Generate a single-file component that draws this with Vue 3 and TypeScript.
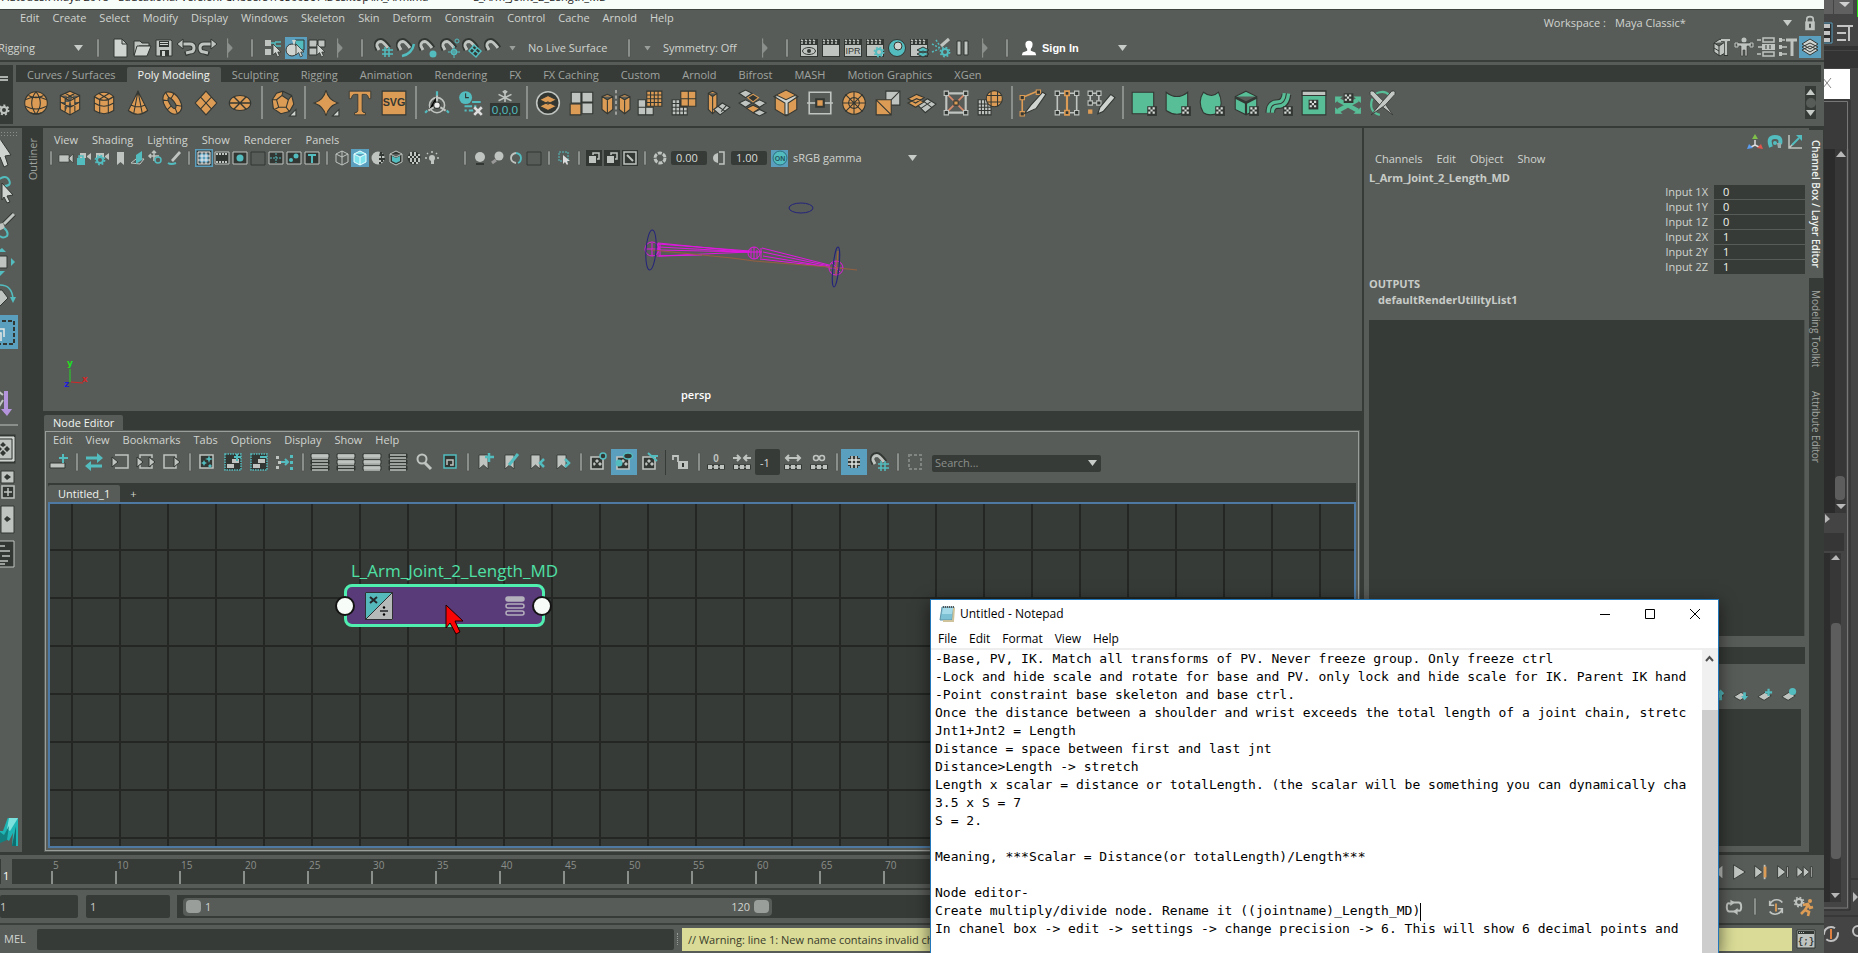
<script setup lang="ts">
import { h, ref } from 'vue'

const G = '#c0c4c0'
const T = '#52bcbf'
const O = '#dd9c55'
const D = '#333733'
const N = '#57be98'

type IconProps = { n: string; s?: number; v?: string; w?: number }

const checker = (x: number, y: number) =>
  `<path fill="${D}" d="M${x} ${y}h9v9h-9z"/><path fill="#d8dcd8" d="M${x + 1} ${y + 1}h2v2h-2zM${x + 5} ${y + 1}h2v2h-2zM${x + 3} ${y + 3}h2v2h-2zM${x + 1} ${y + 5}h2v2h-2zM${x + 5} ${y + 5}h2v2h-2z"/>`
const clap = (extra: string) =>
  `<path fill="${D}" d="M1 1h18v18H1z"/><path fill="${G}" d="M2 7h16v11H2z"/><path stroke="${G}" stroke-width="1.500" d="M2 2l2 1M6 2l2 1M10 2l2 1M14 2l2 1M4 5L2 5M8 5H6M12 5h-2M16 5h-2"/>${extra}`
const gear = (x: number, y: number, c: string) =>
  `<circle cx="${x}" cy="${y}" r="3" fill="none" stroke="${c}" stroke-width="2"/><circle cx="${x}" cy="${y}" r="4.600" fill="none" stroke="${c}" stroke-width="1.600" stroke-dasharray="1.800 1.800"/>`
const magnet = (extra: string) =>
  `<path fill="none" stroke="${D}" stroke-width="5" d="M4 12L2.500 8Q1.500 3 7 2.500Q10 2.500 15 10"/><path fill="none" stroke="${G}" stroke-width="3" d="M5 12L3 8Q2.500 4 7 3.500Q9 3.500 14 10"/>${extra}`
const pointer = (x: number, y: number) =>
  `<path fill="#d0d4d0" stroke="${D}" stroke-width=".8" transform="translate(${x} ${y})" d="M0 0v11l2.600-2.400L4.500 13l2-1L4.800 8H8z"/>`
const bars = (filled: number) =>
  [0, 1, 2].map(i => `<path fill="${i < filled ? G : D}" stroke="${D}" d="M1 ${2 + i * 6}h18v4H1z"/><path stroke="${G}" stroke-width="1.500" d="M2 ${3 + i * 6}h16M2 ${6 + i * 6}h16"/>`).join('')
const clock = `<circle cx="7" cy="7" r="6" fill="${T}"/><path stroke="${D}" fill="none" d="M7 3v4h3"/>`
const bookmark = `<path fill="${G}" stroke="${D}" stroke-width=".8" d="M4 3h9v14l-4.500-4L4 17z"/>`
const graphBox = `<path fill="${D}" stroke="${G}" stroke-width="1.600" d="M3 5h12v12H3z"/><path fill="${G}" d="M9 7l2 2-2 2-2-2zM6 10l2 2-2 2-1-2zM12 10l2 2-2 2-2-2z"/>`
const dots3 = `<path stroke="${D}" stroke-width="5" d="M1 15h18"/><path fill="${G}" d="M2 13h4v4H2zM8 13h4v4H8zM14 13h4v4h-4z"/><path stroke="${G}" d="M2 15h16"/>`
const layer = `<path fill="${G}" stroke="${D}" d="M1 11l8-5 7 4-8 5z"/>`

const icons: Record<string, string> = {
  // shelf
  sphere: `<circle cx="12" cy="12" r="10.500" fill="${O}" stroke="${D}"/><path fill="none" stroke="${D}" d="M2 9q10-5 20 0M2 15q10 5 20 0M12 1.500Q4 12 12 22.500M12 1.500Q20 12 12 22.500M5 5q7 4 14 0M7 21q5 2 10 0"/>`,
  cube: `<path fill="${O}" stroke="${D}" d="M12 1l9 4v13l-9 5-9-5V5zM3 5l9 5 9-5M12 10v13M7.500 3l9 5v12M16.500 3l-9 5v12M3 11l9 5 9-5"/>`,
  cylinder: `<path fill="${O}" stroke="${D}" d="M3 6v13q9 6 18 0V6q-9-8-18 0zM3 6q9 7 18 0M3 12q9 6 18 0M8 9v13M16 9v13M7 3l10 6M17 3L7 9"/>`,
  cone: `<path fill="${O}" stroke="${D}" d="M12 1L3 19q9 7 18 0zM12 1L8 22M12 1l4 21M6 14q6 3 12 0"/>`,
  torus: `<path fill="${O}" fill-rule="evenodd" stroke="${D}" d="M6 2q8-2 13 7t-2 13q-6 2-11-6T6 2zM9 7q-2 1 1 6t5 4q2-2-1-6T9 7zM6 2l3 5M3 9l5 1M8 18l3-3M17 22l-2-5M21 15l-5-1M14 3l-3 5"/>`,
  plane: `<path fill="${O}" stroke="${D}" d="M12 1l10 11-10 11L2 12zM7 6.500l10 11M17 6.500l-10 11"/>`,
  disc: `<ellipse cx="12" cy="12" rx="10" ry="7" fill="${O}" stroke="${D}"/><path stroke="${D}" stroke-width="1.300" d="M2 12h20M6 6l12 12M18 6L6 18"/>`,
  platonic: `<path fill="${O}" stroke="${D}" d="M12 1l8 4 2 8-4 7-8 2-7-5-1-8 4-6zM12 1l-1 4 6 4 3-4M17 9l-2 7-7 0L6 9l5-4M6 9L2 9M8 16l-4 2M15 16l3 4"/><path fill="#d0d4d0" stroke="${D}" d="M24 18v6h-6z"/>`,
  star: `<path fill="${O}" stroke="${D}" d="M12 0q2 9 11 12-9 3-11 12Q10 15 1 12 10 9 12 0z"/><path fill="#d0d4d0" stroke="${D}" d="M24 18v6h-6z"/>`,
  type: `<path fill="${O}" stroke="${D}" stroke-width=".8" d="M2 1h20v7h-2q-.500-4-3-4h-3v15q0 2 3 2v2H7v-2q3 0 3-2V4H7Q4.500 4 4 8H2z"/>`,
  svg: `<path fill="${O}" stroke="${D}" d="M1 1h22v22H1z"/><text x="12" y="15" text-anchor="middle" font-family="Liberation Sans,sans-serif" font-weight="bold" font-size="10" fill="${D}">SVG</text>`,
  tripod: `<path stroke="${T}" stroke-width="2" d="M12 1v5M3 19l-2 2M21 19l2 2"/><circle cx="12" cy="14" r="7" fill="none" stroke="${G}" stroke-width="1.500"/><path stroke="${G}" stroke-width="2" d="M12 5v9l-8 5M12 14l8 5"/><circle cx="12" cy="14" r="3" fill="#eee" stroke="${D}"/>`,
  history: `${clock}<path stroke="${T}" stroke-width="1.800" d="M13 11h8M6 15h7M15 15h2M6 19h2M10 19h4"/><path stroke="#ddd" stroke-width="2.500" d="M15 16l7 7M22 16l-7 7"/>`,
  freeze: `<path stroke="${G}" stroke-width="1.500" d="M12 0v11M6 4l12 6M18 4L6 10M10 1l2 2 2-2"/><path fill="${D}" d="M-2 12h28v12H-2z"/><text x="12" y="22" text-anchor="middle" font-family="Liberation Sans,sans-serif" font-size="11" fill="${T}">0,0,0</text>`,
  combine: `<circle cx="12" cy="12" r="10.500" fill="${D}" stroke="${G}" stroke-width="1.500"/><path fill="${O}" stroke="${D}" d="M12 11l8 4-8 4-8-4zM12 5l8 4-8 4-8-4z"/>`,
  separate: `<path fill="${O}" stroke="${D}" d="M1 13h10v10H1z"/><path fill="${G}" stroke="${D}" d="M2 2h9v10H2zM12 2h10v9H12zM12 12h10v10H12z"/>`,
  mirror: `<path fill="${O}" stroke="${D}" d="M-1 6l5-2 5 2v12l-5 4-5-4zM-1 6l5 3 5-3M4 9v12M15 6l5-2 5 2v12l-5 4-5-4zM15 6l5 3 5-3M20 9v12"/><path stroke="#ddd" stroke-dasharray="3 2" d="M12 0v24"/>`,
  smooth: `<path fill="${O}" stroke="${D}" d="M9 1h14v14H9zM9 4.500h14M9 8h14M9 11.500h14M12.500 1v14M16 1v14M19.500 1v14"/><path fill="${G}" stroke="${D}" d="M1 9h7v7H1zM1 16h7v7H1zM8 16h7v7H8z"/>`,
  reduce: `<path fill="${O}" stroke="${D}" d="M9 1h7v7H9zM16 1h7v7h-7zM9 8h7v7H9zM16 8h7v7h-7z"/><path fill="${G}" stroke="${D}" d="M1 9h8v6h6v8H1zM1 12.500h8M1 16h14M1 19.500h14M4.500 9v14M8 9v14M11.500 15v8"/>`,
  extrude: `<path fill="${O}" stroke="${D}" d="M3 3l4-2 4 2v15l-4 4-4-4zM3 3l4 3 4-3M7 6v16"/><path fill="${G}" stroke="${D}" d="M8 18l8-6 7 4-9 7zM12 15l7 5M15 20l5-6"/>`,
  bridge: `<path fill="${G}" stroke="${D}" d="M0 3l6-3 6 3-6 4zM0 12l6-3 6 3-6 4zM13 12l6-3 6 3-6 4zM13 21l6-3 6 3-6 3z"/><path fill="${O}" stroke="${D}" d="M7 17l6-3 6 3-6 4z"/><path fill="${D}" stroke="${O}" d="M8 7l5-3 5 3-5 4z"/>`,
  bevel: `<path fill="${O}" stroke="${D}" d="M12 0l10 5v13l-10 6-10-6V5z"/><path fill="#d0d4d0" stroke="${D}" d="M1 6l3-1 8 4 8-4 3 1-9 6v11h-3V12z"/>`,
  collapse: `<path fill="none" stroke="${G}" stroke-width="1.500" d="M2 2h20v20H2z"/><path stroke="${G}" stroke-width="1.500" d="M0 12h24"/><path fill="${O}" stroke="${D}" stroke-width="2" d="M8.500 8.500h7v7h-7z"/>`,
  fill: `<circle cx="12" cy="12" r="10.500" fill="${O}" stroke="${D}"/><circle cx="12" cy="12" r="5" fill="none" stroke="${D}"/><path stroke="${D}" d="M12 1v22M1 12h22M4 4l16 16M20 4L4 20"/>`,
  triang: `<path fill="${G}" stroke="${D}" d="M10 1h13v13H10z"/><path fill="${O}" stroke="${D}" d="M1 9h14v14H1zM1 9l14 14"/><path stroke="${D}" d="M15 9l8-8"/>`,
  connect: `<path fill="${G}" stroke="${D}" d="M8 14l9-6 8 5-10 8zM11 17l9-6M13 10l8 6"/><path fill="${O}" stroke="${D}" d="M-1 12l8-4 7 3-8 5zM-1 8l8-4 7 3-8 5z"/>`,
  detach: `<path fill="none" stroke="${G}" stroke-width="2" d="M3 3h18v18H3z"/><path stroke="#d98a6a" stroke-width="1.500" d="M4 4l16 16M20 4L4 20"/><path fill="${D}" stroke="${G}" d="M1 1h4v4H1zM19 1h4v4h-4zM1 19h4v4H1zM19 19h4v4h-4z"/><path fill="${O}" stroke="${D}" d="M10 10h4v4h-4z"/>`,
  project: `<path fill="${G}" stroke="${D}" d="M1 9h12v14H1zM1 13h12M1 16h12M1 19h12M4 9v14M7 9v14M10 9v14"/><circle cx="16" cy="8" r="7.500" fill="${O}" stroke="${D}"/><path stroke="${D}" d="M13 1v14M19 1v14M9 5h14M9 11h14"/>`,
  draw: `<path fill="none" stroke="${O}" stroke-width="1.500" d="M2 22V7l14-6"/><path fill="${D}" stroke="${O}" d="M0 5h4v4H0zM15 0h4v4h-4zM0 20h4v4H0z"/><path fill="#d0d4d0" stroke="${D}" d="M4 22l6-8L21 2l3 2-9 13z"/>`,
  edgeflow: `<path fill="none" stroke="${G}" stroke-width="1.500" d="M3 3h18v18H3z"/><path stroke="${O}" stroke-width="2" d="M12 2v20"/><path fill="${D}" stroke="${G}" d="M1 1h4v4H1zM19 1h4v4h-4zM1 19h4v4H1zM19 19h4v4h-4z"/><path fill="${D}" stroke="${O}" stroke-width="1.500" d="M10 1h4v4h-4zM10 19h4v4h-4z"/>`,
  quad: `<path fill="none" stroke="${G}" stroke-width="1.500" d="M2 3h8v9H2z"/><path fill="${D}" stroke="${G}" d="M0 1h4v4H0zM8 1h4v4H8zM0 10h4v4H0zM8 10h4v4H8z"/><path fill="${O}" d="M0 18h4v4H0z"/><path fill="#d0d4d0" stroke="${D}" d="M9 22l2-6L21 4l4 3-11 13z"/>`,
  uvplane: `<path fill="${N}" stroke="${D}" d="M1 2h20v20H1z"/>${checker(15, 15)}`,
  uvcyl: `<path fill="${N}" stroke="${D}" d="M1 2q10 8 20 0v17q-10 7-20 0z"/>${checker(15, 15)}`,
  uvsph: `<path fill="${N}" stroke="${D}" d="M4 2q8 6 14 0 5 10 0 19-8 4-14 0Q-2 11 4 2z"/>${checker(15, 15)}`,
  uvauto: `<path fill="${N}" stroke="${D}" d="M12 1l10 5v12l-10 5-10-5V6zM2 6l10 5 10-5M12 11v12"/><path stroke="${D}" stroke-width="2" fill="none" d="M2 7l10 5 10-5M12 12v11"/>${checker(15, 15)}`,
  uvcont: `<path fill="none" stroke="${D}" stroke-width="9" d="M3 21q0-8 7-8t8-9"/><path fill="none" stroke="${N}" stroke-width="7" d="M3 21q0-8 7-8t8-10"/><path fill="none" stroke="${D}" d="M3 21q0-8 7-8t8-10"/>${checker(15, 15)}`,
  uvedit: `<path fill="${N}" stroke="${D}" d="M1 1h22v22H1z"/><path fill="${G}" stroke="${D}" d="M1 1h22v4H1z"/>${checker(7, 9)}`,
  uvsnap: `<path stroke="${N}" stroke-width="4" d="M3 9l18 10M21 9L3 19"/><path fill="${N}" d="M0 6h7L0 12zM24 6h-7l7 6zM0 22v-6l7 6zM24 22v-6l-7 6z"/>${checker(8, 3)}`,
  uvcut: `<path fill="none" stroke="${N}" stroke-width="2" d="M5 4q9-5 14 1M3 8q-4 12 7 15"/><path fill="#c4c8c4" stroke="${D}" stroke-width=".8" d="M1 4Q0 0 4 1l9 9 9 13L9 13z"/><path fill="#c4c8c4" stroke="${D}" stroke-width=".8" d="M24 4q1-4-3-3l-9 10L2 23l13-9z"/>`,

  // status line
  newdoc: `<path fill="#d0d4d0" stroke="${D}" d="M4 1h8l5 5v13H4z"/><path stroke="${D}" fill="${G}" d="M12 1v5h5z"/>`,
  open: `<path fill="${G}" stroke="${D}" d="M2 3h6l2 2h7v3H7L2 17z"/><path fill="#d0d4d0" stroke="${D}" d="M5 8h14l-4 10H2z"/>`,
  save: `<path fill="${G}" stroke="${D}" d="M2 2h15l1 1v15H2z"/><path fill="${D}" d="M5 3h10v6H5zM6 12h9v6H6z"/><path fill="#d0d4d0" d="M6 4h8v1H6zM6 6h8v1H6zM8 13h3v5H8z"/>`,
  undo: `<path fill="none" stroke="${D}" stroke-width="5" d="M6 6h8q4 0 4 4t-4 4l-5 2"/><path fill="none" stroke="${G}" stroke-width="3" d="M6 6h8q4 0 4 4t-4 4l-4 1"/><path fill="${G}" stroke="${D}" d="M1 6l6-5v10z"/>`,
  redo: `<path fill="none" stroke="${D}" stroke-width="5" d="M14 6H6q-4 0-4 4t4 4l5 2"/><path fill="none" stroke="${G}" stroke-width="3" d="M14 6H6q-4 0-4 4t4 4l4 1"/><path fill="${G}" stroke="${D}" d="M19 6l-6-5v10z"/>`,
  selhier: `<path fill="${G}" d="M1 2h6v6H1zM1 11h6v6H1z"/><path fill="none" stroke="${T}" stroke-width="1.500" d="M7 5h4v7M11 4h6M9 8h8"/>${pointer(9, 6)}`,
  selobj: `<path fill="${T}" stroke="${D}" d="M9 2h9v10H9z"/><circle cx="6" cy="12" r="6" fill="#d0d4d0" stroke="${D}"/><path fill="#d0d4d0" d="M6 2h4l-2 6z"/>${pointer(10, 6)}`,
  selcomp: `<path fill="${G}" stroke="${D}" d="M1 2h8v7H1zM10 2h7v7h-7zM1 10h8v7H1z"/>${pointer(9, 6)}`,
  mgrid: magnet(`<path stroke="${T}" stroke-width="1.500" d="M11 9v10M15 9v10M8 12h11M8 16h11"/>`),
  mcurve: magnet(`<path fill="none" stroke="${T}" stroke-width="2.500" d="M6 18q10-2 12-12"/>`),
  mpoint: magnet(`<circle cx="15" cy="16" r="3.500" fill="${T}"/>`),
  mproj: magnet(`<circle cx="17" cy="3" r="2" fill="none" stroke="${T}"/><circle cx="14" cy="14" r="2.500" fill="none" stroke="${T}" stroke-width="1.500"/><path stroke="${T}" d="M14 8v12M8 14h12"/>`),
  mplane: magnet(`<path fill="${D}" stroke="${T}" stroke-width="1.500" d="M12 7l7 6-5 6-7-6zM10 10l7 6M15 10l-5 6"/>`),
  mlive: magnet(''),
  reye: clap(`<ellipse cx="10" cy="13" rx="6.500" ry="3.500" fill="none" stroke="${D}"/><circle cx="10" cy="13" r="2" fill="${D}"/>`),
  rclap: clap(''),
  ripr: clap(`<text x="10" y="16" text-anchor="middle" font-family="Liberation Sans,sans-serif" font-size="9" fill="${D}">IPR</text>`),
  rset: clap(gear(14, 14, T)),
  rball: `<circle cx="10" cy="10" r="8.500" fill="${T}" stroke="${D}"/><circle cx="11" cy="8" r="4" fill="#d0d4d0" stroke="${D}"/>`,
  rlayer: clap(`<path fill="${T}" stroke="${D}" d="M14 13l6 3-6 3-6-3zM14 9l6 3-6 3-6-3z"/>`),
  rlight: `<path stroke="${G}" stroke-width="3" d="M18 1l-8 7"/><path stroke="${T}" stroke-width="1.500" stroke-dasharray="2 1.500" d="M1 6l8 4M1 14l7-3M5 2l4 6"/>${gear(14, 14, T)}`,
  pause: `<path fill="${G}" stroke="${D}" d="M4 3h4v14H4zM11 3h4v14h-4z"/>`,
  user: `<path fill="#fff" d="M10 2q4 0 4 4 0 3-2 5v2l5 2 1 3H2l1-3 5-2v-2Q6 9 6 6q0-4 4-4z"/>`,
  lock: `<path fill="none" stroke="${G}" stroke-width="2" d="M6 9V5q0-3 4-3t4 3v4"/><path fill="${G}" d="M4 8h12v11H4z"/><path fill="${D}" d="M9 11h2v5H9z"/>`,
  hud1: `<path fill="${G}" stroke="${D}" d="M2 6l6-4 5 3v11l-5 3-6-4zM2 6l5 3 6-4M7 9v10M2 11l5 3"/><path stroke="${D}" stroke-width="4" d="M9 3h9M14 3v16"/><path stroke="${G}" stroke-width="2.500" d="M9 3h9M14 3v15"/>`,
  hud2: `<circle cx="10" cy="3" r="2.500" fill="${G}"/><path fill="${G}" stroke="${D}" stroke-width=".6" d="M3 6h14v3h-4v10h-2v-6H9v6H7V9H3z"/><path fill="none" stroke="${G}" d="M1 6h3v4H1zM16 6h3v4h-3z"/>`,
  hud3: `<path stroke="${G}" stroke-width="1.500" fill="none" d="M1 3h4M7 1h11v4H7zM1 17h4M7 15h11v4H7z"/><path stroke="${G}" stroke-width="1.500" d="M2 10h4"/><path fill="${G}" d="M6 7h13v6H6z"/><path stroke="${D}" d="M10 8v4M14 8v4"/>`,
  hud4: `<path stroke="${G}" stroke-width="1.500" fill="none" d="M3 3h4M3 10h6M3 17h6"/><path fill="${G}" d="M1 1h3v4H1zM1 8h3v4H1zM1 15h3v4H1z"/><path stroke="${G}" stroke-width="3" d="M8 3h11M14 3v16"/>`,
  hud5: `<path fill="#d0d4d0" stroke="${D}" d="M10 9l8 4-8 5-8-5zM10 6l8 4-8 5-8-5zM10 2l8 5-8 5-8-5z"/>`,

  // viewport
  cam: `<path fill="${G}" stroke="${D}" stroke-width=".6" d="M1 5h10v7H1zM11 8l4-4v9l-4-4z"/>`,
  camlock: `<path fill="${G}" d="M4 3h6v5H4zM11 6l4-3v7l-4-3z"/><path fill="none" stroke="${T}" stroke-width="1.500" d="M3 9V6h4v3"/><path fill="${T}" d="M1 8h8v7H1z"/>`,
  camgear: `<path fill="${G}" d="M2 3h8v5H2zM11 6l4-3v7l-4-3z"/>${gear(6, 10, T)}`,
  bm: `<path fill="${G}" d="M5 2h7v13l-3.500-3L5 15z"/>`,
  imgp: `<path fill="none" stroke="${G}" d="M1 13l5-4h8l-4 5z"/><path fill="${T}" d="M6 5l6-4v9l-6 4z"/>`,
  pan2d: `<path stroke="${G}" stroke-width="1.500" fill="none" d="M6 1v10M1 6h10M4 3l2-2 2 2M3 4L1 6l2 2"/><circle cx="10" cy="10" r="3" fill="none" stroke="${T}" stroke-width="1.500"/>`,
  pen: `<path fill="${G}" d="M5 10l8-9 2 2-8 9z"/><path fill="none" stroke="${T}" stroke-width="2" d="M2 13q3 2 8 0"/>`,
  vgrid: `<path fill="none" stroke="${D}" stroke-width="3" d="M2 2h12v12H2z"/><path fill="none" stroke="#eee" d="M2 2h12v12H2zM6 2v12M10 2v12M2 6h12M2 10h12"/>`,
  vfilm: `<path fill="${D}" stroke="${G}" d="M1 2h14v12H1z"/><path stroke="${G}" stroke-dasharray="2 1" stroke-width="2" d="M2 4h12M2 12h12"/>`,
  vres: `<path fill="${D}" stroke="${G}" d="M1 2h14v12H1z"/><circle cx="8" cy="8" r="3.500" fill="${T}"/>`,
  vblank: `<path fill="none" stroke="${D}" d="M1 2h14v13H1z"/>`,
  vchart: `<path fill="${D}" stroke="${G}" d="M1 2h14v12H1z"/><path stroke="${T}" stroke-dasharray="2 1" d="M2 8h12M8 3v10"/>`,
  vsafe: `<path fill="${D}" stroke="${G}" d="M1 2h14v12H1z"/><circle cx="10" cy="6" r="2.500" fill="${T}"/><circle cx="5" cy="10" r="2" fill="${T}"/>`,
  vtext: `<path fill="${D}" stroke="${G}" d="M1 2h14v12H1z"/><path stroke="${T}" stroke-width="2" d="M4 5h8M8 5v8"/>`,
  wire: `<path fill="none" stroke="${G}" d="M8 1l6 3v8l-6 3-6-3V4zM2 4l6 3 6-3M8 7v8M8 1v6"/>`,
  solid: `<path fill="#7fe3ee" stroke="#e8ffff" d="M8 1l6 3v8l-6 3-6-3V4zM2 4l6 3 6-3M8 7v8"/>`,
  half: `<circle cx="8" cy="8" r="6.500" fill="${G}"/><path fill="${D}" d="M10 2h2v2h2v2h-2v2h3v2h-2v2h-2v2h-2v-2h2v-2h-2V8h2V6h-2z"/>`,
  shadec: `<path fill="${D}" stroke="${G}" d="M8 1l6 3v8l-6 3-6-3V4zM2 4l6 3 6-3"/><path fill="${T}" d="M4 6l4 2 4-2v5l-4 2-4-2z"/>`,
  checkb: `<circle cx="8" cy="8" r="6.500" fill="${D}"/><path stroke="${G}" stroke-width="2" stroke-dasharray="2 2" d="M4 3h8M2 7h12M4 11h10"/><path stroke="${G}" stroke-width="2" stroke-dasharray="2 2" d="M4 5h10M4 9h10M6 13h6"/>`,
  bulb: `<circle cx="8" cy="8" r="3" fill="${G}"/><path fill="${G}" d="M7 10h3v4H7z"/><path stroke="${G}" stroke-width="1.500" d="M1 8h2M13 8h2M3 3l1 1M13 3l-1 1M8 1v2"/>`,
  ball: `<circle cx="8" cy="7" r="5" fill="${G}"/><path stroke="${D}" stroke-width="2" d="M4 14h8"/>`,
  ball2: `<circle cx="9" cy="6" r="4.500" fill="${G}"/><path stroke="#999" stroke-width="3" d="M2 13l4-3"/>`,
  ballo: `<path fill="none" stroke="${G}" stroke-width="1.800" d="M8 3q-5 1-5 5t5 5"/><path fill="none" stroke="${T}" stroke-width="1.800" d="M8 3q5 1 5 5t-3 5"/>`,
  isel: `<path fill="none" stroke="${T}" stroke-dasharray="2 1" d="M3 2h9v9H3z"/><path fill="#ddd" d="M7 5v9l2-2 2 3 1-1-1-3h3z"/>`,
  cube2: `<path fill="${D}" d="M0 0h16v16H0z"/><path fill="${G}" d="M3 6h7v7H3z"/><path fill="none" stroke="${G}" stroke-width="1.500" d="M7 5V3h6v6h-2"/>`,
  xray: `<path fill="${D}" d="M0 0h16v16H0z"/><path fill="none" stroke="${G}" stroke-width="1.500" d="M2 2h12v12H2z"/><path stroke="${G}" stroke-width="2" d="M5 5l6 6"/>`,
  aper: `<circle cx="8" cy="8" r="5" fill="none" stroke="${G}" stroke-width="3" stroke-dasharray="4 1.200"/>`,
  gam: `<path fill="none" stroke="${G}" stroke-width="1.500" d="M9 2h5v12H9"/><path fill="${G}" d="M8 3v10q-5-1-5-5t5-5z"/>`,
  on: `<circle cx="8" cy="8" r="7" fill="${T}" stroke="#2b6f80"/><text x="8" y="10.500" text-anchor="middle" font-family="Liberation Sans,sans-serif" font-size="7" font-weight="bold" fill="#24545e">ON</text>`,

  // node editor
  addnode: `<path fill="${G}" stroke="${D}" d="M1 11h15v5H1z"/><path stroke="${T}" stroke-width="2" d="M14 2v9M10 6h9"/>`,
  swap: `<path stroke="${T}" stroke-width="3" d="M2 6h12M6 14h12"/><path fill="${T}" d="M13 1l6 5-6 5zM7 9l-6 5 6 5z"/>`,
  inn: `<path fill="none" stroke="${G}" stroke-width="1.500" d="M5 3h13v13H5"/><path fill="${G}" stroke="${D}" d="M2 5l6 5-6 5z"/>`,
  both: `<path fill="none" stroke="${G}" stroke-width="1.500" d="M4 6V3h12v3M4 13v3h12v-3"/><path fill="${G}" stroke="${D}" d="M1 5l6 5-6 5zM13 5l6 5-6 5z"/>`,
  out: `<path fill="none" stroke="${G}" stroke-width="1.500" d="M14 6V3H2v13h12v-3"/><path fill="${G}" stroke="${D}" d="M12 5l6 5-6 5z"/>`,
  clear: `<path fill="${D}" stroke="${G}" stroke-width="1.500" d="M3 3h13v13H3z"/><path fill="${T}" d="M12 3l1 3 3 1-3 1-1 3-1-3-3-1 3-1zM7 8l1 2 2 1-2 1-1 2-1-2-2-1 2-1zM13 12l1 1 1 1-1 1-1 1-1-1-1-1 1-1z"/>`,
  addsel: `<path fill="${D}" stroke="${T}" stroke-width="1.500" stroke-dasharray="1.500 1" d="M2 2h16v16H2z"/><path fill="${G}" d="M4 12h7v4H4zM9 7h7v4H9z"/><path stroke="${T}" stroke-width="2" d="M14 2v7M11 5h7"/>`,
  remsel: `<path fill="${D}" stroke="${T}" stroke-width="1.500" stroke-dasharray="1.500 1" d="M2 2h16v16H2z"/><path fill="${G}" d="M4 12h7v4H4zM9 7h7v4H9z"/><path stroke="${T}" stroke-width="2" d="M11 5h7"/>`,
  arrange: `<path fill="${G}" d="M1 4h3v3H1zM3 9h3v3H3zM1 14h3v3H1z"/><path stroke="${T}" stroke-width="2" fill="none" d="M6 10h7M10 7l3 3-3 3"/><path fill="${T}" d="M15 3h3v3h-3zM15 9h3v3h-3zM15 15h3v3h-3z"/>`,
  r1: bars(1),
  r2: bars(2),
  r3: bars(3),
  r4: bars(0),
  mag: `<circle cx="8" cy="7" r="4.500" fill="none" stroke="${G}" stroke-width="2"/><path stroke="${G}" stroke-width="3" d="M11 11l6 6"/>`,
  swatch: `<path fill="${D}" stroke="${T}" stroke-width="1.500" d="M4 3h12v13H4z"/><path fill="none" stroke="${G}" stroke-width="1.500" d="M7 13V8h6v5h-3"/>`,
  bmadd: `${bookmark}<path stroke="${T}" stroke-width="2.500" d="M14 1v9M10 5h9"/>`,
  bmedit: `${bookmark}<path stroke="${T}" stroke-width="3" d="M17 2L8 13"/>`,
  bmprev: `${bookmark}<path fill="none" stroke="${T}" stroke-width="2.500" d="M17 7l-4 4 4 4"/>`,
  bmnext: `${bookmark}<path fill="none" stroke="${T}" stroke-width="2.500" d="M12 7l4 4-4 4"/>`,
  geye: `${graphBox}<circle cx="15" cy="4" r="3" fill="${D}" stroke="${T}" stroke-width="1.500"/>`,
  geye2: `${graphBox}<circle cx="5" cy="11" r="3.500" fill="${T}"/><ellipse cx="14" cy="4" rx="4.500" ry="3" fill="${D}" stroke="${T}" stroke-width="1.500"/>`,
  gpin: `${graphBox}<path stroke="${T}" stroke-width="2" d="M8 1l9 8M12 4h6"/>`,
  unlock: `<path fill="none" stroke="${G}" stroke-width="1.800" d="M2 8V4h5v6"/><path fill="${G}" d="M7 9h10v8H7z"/><path fill="${D}" d="M11 11h2v4h-2z"/>`,
  d0: `<text x="10" y="10" text-anchor="middle" font-family="Liberation Sans,sans-serif" font-size="10" font-weight="bold" fill="${G}">0</text>${dots3}`,
  din: `<path stroke="${G}" stroke-width="2" d="M1 6h6M5 3l3 3-3 3M19 6h-6M15 3l-3 3 3 3" fill="none"/>${dots3}`,
  dout: `<path stroke="${G}" stroke-width="2" d="M3 6h14M6 3L3 6l3 3M14 3l3 3-3 3" fill="none"/>${dots3}`,
  dinf: `<circle cx="7" cy="6" r="2.500" fill="none" stroke="${G}" stroke-width="1.500"/><circle cx="13" cy="6" r="2.500" fill="none" stroke="${G}" stroke-width="1.500"/>${dots3}`,
  hash: `<path stroke="${D}" stroke-width="4" d="M8 4v12M12 4v12M4 8h12M4 12h12"/><path stroke="#e0e4e0" stroke-width="1.500" d="M8 4v12M12 4v12M4 8h12M4 12h12"/>`,
  dash: `<path fill="none" stroke="#828682" stroke-width="2" stroke-dasharray="3 2" d="M4 3h12v14H4z"/>`,

  // channel box and layers
  axes: `<path stroke="#ddd" stroke-width="1.500" fill="none" d="M8 6v5l-4 2M8 11l4 2"/><path fill="#7ec04a" d="M8 0l3 5H5z"/><path fill="#5a9cf0" d="M0 15l2-5 4 4z"/><path fill="#e0544c" d="M16 15l-2-5-4 4z"/>`,
  cspeed: `<path fill="none" stroke="${T}" stroke-width="4" d="M4 13Q0 3 8 3q7 0 5 7"/><circle cx="8" cy="9" r="2" fill="${T}"/><path fill="#9aa" d="M10 9h4v5h-3z"/>`,
  cgraph: `<path fill="none" stroke="${G}" stroke-width="1.500" d="M2 1v13h13M2 14l4-4"/><path stroke="${T}" stroke-width="2" d="M5 11l7-7"/><path fill="${T}" d="M9 1h6v6z"/>`,
  lup: `${layer}<path stroke="${T}" stroke-width="3" d="M13 6v9M10 8l3-3 3 3" fill="none"/>`,
  ldown: `${layer}<path stroke="${T}" stroke-width="3" d="M13 6v5" fill="none"/><path fill="${T}" d="M9 10h8l-4 5z"/>`,
  ladd: `${layer}<path stroke="${T}" stroke-width="2.500" d="M13 2v8M9 6h8"/>`,
  lball: `${layer}<circle cx="13" cy="5" r="4" fill="${T}"/>`,

  // playback
  stepb: `<path fill="${G}" d="M16 3v14l-8-7zM4 3h3v14H4z"/>`,
  play: `<path fill="${G}" stroke="${D}" d="M4 2l13 8-13 8z"/>`,
  nkey: `<path fill="${G}" stroke="${D}" d="M3 3l9 7-9 7z"/><path stroke="${G}" stroke-width="2" d="M14 2v16"/><path fill="${O}" d="M13 4h3v12h-3z"/>`,
  stepf: `<path fill="${G}" stroke="${D}" d="M4 3l9 7-9 7zM14 4h2v12h-2z"/>`,
  toend: `<path fill="${G}" stroke="${D}" d="M1 4l7 6-7 6zM8 4l7 6-7 6zM16 4h2v12h-2z"/>`,
  loop: `<path fill="none" stroke="${G}" stroke-width="2.200" d="M8 5h7q3 0 3 5t-3 4h-2M12 15H5q-3 0-3-5t3-4h2"/><path fill="${G}" d="M6 2l5 3-5 4zM14 11l-5 4 5 4z"/>`,
  autok: `<path fill="none" stroke="${G}" stroke-width="1.800" d="M3 8q2-6 8-6 4 0 6 3M17 12q-2 6-8 6-4 0-6-3M3 3v5h5M17 17v-5h-5"/><path fill="${O}" d="M9 6h2v9H9z"/>`,
  prefs: `${gear(5, 5, G)}<path fill="none" stroke="${O}" stroke-width="2.600" d="M9 8l5-1 2 4 3-1M14 8l-3 5 4 2-1 4M11 13l-4 4"/><circle cx="16" cy="4" r="2" fill="${O}"/>`,
  script: `<path fill="${G}" stroke="${D}" d="M1 1h18v18H1z"/><path fill="${D}" d="M2 2h16v3H2z"/><path stroke="${G}" stroke-dasharray="1 1" d="M3 3.500h6"/><text x="10" y="15" text-anchor="middle" font-family="Liberation Mono,monospace" font-weight="bold" font-size="9" fill="${D}">{;}</text>`,

  // toolbox, cut by the window's left edge
  select: `<path fill="#d0d4d0" stroke="${D}" d="M-6-12L11 13l-6 1 3 9-4 2-4-10-6 5z"/>`,
  lasso: `<path fill="none" stroke="${T}" stroke-width="2" d="M-2 3q8-6 11 0t-5 6"/><path fill="#d0d4d0" stroke="${D}" d="M2 6l11 12-6 1 3 6-3 1-3-6-2 3z"/>`,
  paint: `<path stroke="${D}" stroke-width="5" d="M14 2L4 12"/><path stroke="${G}" stroke-width="3" d="M14 2L4 12"/><path fill="${G}" d="M-4 13l7-2 2 5-9 4z"/><path fill="none" stroke="${T}" stroke-width="2" d="M4 16q5 4 3 8-4 3-7 0"/>`,
  move: `<path fill="${G}" stroke="${D}" d="M-6 9H7v12H-6z"/><path fill="${T}" d="M-3 5l5-4 4 4zM-3 24h8l-5 5zM11 11l4 4-4 4z"/>`,
  rotate: `<path fill="${G}" stroke="${D}" d="M-6 8h8l6 8-8 8h-8z"/><path fill="none" stroke="${T}" stroke-width="1.500" d="M0 3q12 0 13 14"/><path fill="${T}" d="M10 15h6l-3 6z"/>`,
  scale: `<path fill="#5b9fbf" d="M-6-2h24v34H-6z"/><path fill="none" stroke="${D}" stroke-width="2" stroke-dasharray="4 2" d="M-4 4h18v23H-4z"/><path fill="none" stroke="#e4e8e4" stroke-width="1.500" d="M-4 12h8v8M-4 16h5v8"/>`,
  lastt: `<path stroke="${G}" stroke-width="2" fill="none" d="M-2 3l5 4M3 12l-5 8"/><path stroke="#b494dc" stroke-width="4" d="M6 3v22"/><path fill="#b494dc" d="M1 21h11l-5 7z"/>`,
  lay1: `<path fill="${G}" stroke="${D}" stroke-width="3" d="M-6 2h20v26H-6z"/><path fill="${G}" stroke="#e0e4e0" d="M-6 3h20v24H-6z"/><path fill="none" stroke="${D}" d="M-6 5h18v20H-6z"/><path fill="${D}" d="M-4 15l3-3 3 3-3 3zM0 11l3-3 3 3-3 2zM4 15l3-3 3 3-3 3zM0 19l3-3 3 3-3 3z"/>`,
  lay2: `<path fill="${G}" stroke="${D}" d="M1 2h13v12H1z"/><path fill="${D}" d="M4 8l3-3 4 3-4 3z"/><path fill="${D}" stroke="${G}" stroke-width="1.500" d="M2 17h12v12H2z"/><path stroke="${G}" stroke-width="1.500" d="M8 19v8M4 23h8"/>`,
  lay3: `<path fill="${G}" stroke="${D}" d="M1 2h13v27H1z"/><path fill="${D}" d="M4 15l3-3 4 3-4 3z"/>`,
  lay4: `<path fill="${D}" stroke="${G}" d="M-6 2h20v26H-6z"/><path stroke="${G}" stroke-width="1.500" d="M0 7h5M0 12h10M2 17h8M0 22h8M0 25h5"/>`,
  mlogo: `<path fill="#1fb5b5" d="M9 1h9v28h-6l1-13-4 8-9-6V2z"/><path fill="#7ce0dc" d="M9 1h9l-8 13-3-2z"/><path fill="#585c58" d="M0 0h8L3 14H0z"/><path fill="#13807f" d="M0 15l4 3 5-9-2 14-7 3z"/><path fill="#0f6d70" d="M12 29l4-20v20z"/>`,
}

const Icon = (p: IconProps) => {
  const s = p.s ?? 20
  return h('svg', {
    width: p.w ?? s, height: s, viewBox: p.v ?? '0 0 20 20', 'aria-hidden': 'true', innerHTML: icons[p.n] ?? '',
  })
}
Icon.props = ['n', 's', 'v', 'w']

const mainMenu = ['Edit', 'Create', 'Select', 'Modify', 'Display', 'Windows', 'Skeleton', 'Skin', 'Deform', 'Constrain', 'Control', 'Cache', 'Arnold', 'Help']
const fileTools = ['|', 'newdoc', 'open', 'save', 'undo', 'redo', '>', '|', 'selhier', 'selobj*', 'selcomp', '>', '|', 'mgrid', 'mcurve', 'mpoint', 'mproj', 'mplane', 'mlive']
const renderTools = ['>', '|', 'reye', 'rclap', 'ripr', 'rset', 'rball', 'rlayer', 'rlight', 'pause', '>', '|']
const shelfTabs = ['Curves / Surfaces', 'Poly Modeling', 'Sculpting', 'Rigging', 'Animation', 'Rendering', 'FX', 'FX Caching', 'Custom', 'Arnold', 'Bifrost', 'MASH', 'Motion Graphics', 'XGen']
const shelf = 'sphere cube cylinder cone torus plane disc | platonic | star type svg | tripod history freeze | combine separate mirror smooth reduce extrude bridge bevel collapse fill triang connect detach project | draw edgeflow quad | uvplane uvcyl uvsph uvauto uvcont uvedit uvsnap uvcut'.split(' ')
const viewMenu = ['View', 'Shading', 'Lighting', 'Show', 'Renderer', 'Panels']
const viewTools = '| cam camlock camgear bm imgp pan2d pen | vgrid* vfilm vres vblank vchart vsafe vtext | wire solid* half shadec checkb bulb _ | ball ball2 ballo vblank | isel | cube2 cube2 xray | aper'.split(' ')
const nodeMenu = ['Edit', 'View', 'Bookmarks', 'Tabs', 'Options', 'Display', 'Show', 'Help']
const nodeToolsA = 'addnode | swap inn both out | clear addsel remsel arrange | r1 r2 r3 r4 mag swatch | bmadd bmedit bmprev bmnext | geye geye2* gpin : unlock | d0 din'.split(' ')
const nodeToolsB = 'dout dinf | hash* mgrid | dash'.split(' ')
const toolbox = ['select', 'lasso', 'paint', 'move', 'rotate', 'scale']
const layouts = ['lay1', 'lay2', 'lay3', 'lay4']
const channels = [['Input 1X', '0'], ['Input 1Y', '0'], ['Input 1Z', '0'], ['Input 2X', '1'], ['Input 2Y', '1'], ['Input 2Z', '1']]
const ticks = Array.from({ length: 14 }, (_, i) => (i + 1) * 5)

const note = ref(`-Base, PV, IK. Match all transforms of PV. Never freeze group. Only freeze ctrl
-Lock and hide scale and rotate for base and PV. only lock and hide scale for IK. Parent IK hand
-Point constraint base skeleton and base ctrl.
Once the distance between a shoulder and wrist exceeds the total length of a joint chain, stretc
Jnt1+Jnt2 = Length
Distance = space between first and last jnt
Distance>Length -> stretch
Length x scalar = distance or totalLength. (the scalar will be something you can dynamically cha
3.5 x S = 7
S = 2.

Meaning, ***Scalar = Distance(or totalLength)/Length***

Node editor-
Create multiply/divide node. Rename it ((jointname)_Length_MD)
In chanel box -> edit -> settings -> change precision -> 6. This will show 6 decimal points and`)
const caretLine = 14
const caretStyle = {
  left: `calc(4px + ${note.value.split('\n')[caretLine].length}ch)`,
  top: `${caretLine * 18 + 1}px`,
}
const base = (n: string) => n.replace('*', '')
</script>

<template>
  <div class="desktop">
    <main class="maya">
      <div class="title"><span>Autodesk Maya 2018 - Educational Version: C:\Users\16500567\Desktop\IK_Arm.ma*</span><span>---</span><span>L_Arm_Joint_2_Length_MD</span></div>

      <header class="head">
        <div class="head-left">
          <nav class="menu main-menu">
            <button v-for="m in mainMenu" :key="m">{{ m }}</button>
          </nav>
          <div class="status">
            <select class="mode" aria-label="Menu set"><option>Rigging</option></select>
            <i class="caret-down mode-caret" />
            <template v-for="(t, i) in fileTools" :key="i">
              <i v-if="t === '|'" class="sep c22" />
              <i v-else-if="t === '>'" class="sep arrow c22" />
              <button v-else class="tb c22" :class="{ on: t.endsWith('*') }" :aria-label="base(t)"><Icon :n="base(t)" /></button>
            </template>
            <i class="caret-down small live-caret" />
            <button class="txt live">No Live Surface</button>
            <i class="sep c22" />
            <i class="caret-down small sym-caret" />
            <button class="txt sym">Symmetry: Off</button>
            <template v-for="(t, i) in renderTools" :key="'r' + i">
              <i v-if="t === '|'" class="sep c22" />
              <i v-else-if="t === '>'" class="sep arrow c22" />
              <button v-else class="tb c22" :aria-label="t"><Icon :n="t" /></button>
            </template>
            <button class="txt sign"><Icon n="user" :s="18" />Sign In</button>
            <i class="caret-down" />
          </div>
        </div>
        <div class="head-right">
          <div class="workspace">
            <label for="ws">Workspace :</label>
            <select id="ws"><option>Maya Classic*</option></select>
            <i class="caret-down" />
            <button class="tb c22" aria-label="Lock workspace"><Icon n="lock" :s="16" /></button>
          </div>
          <div class="panels">
            <button v-for="i in 5" :key="i" class="tb c22" :class="{ on: i === 5 }" :aria-label="'Panel ' + i"><Icon :n="'hud' + i" /></button>
          </div>
        </div>
      </header>

      <section class="shelf">
        <div class="shelf-side">
          <i class="bars" />
          <svg width="11" height="12" viewBox="0 0 11 12"><circle cx="4" cy="6" r="3" fill="none" stroke="#c0c4c0" stroke-width="2" /><circle cx="4" cy="6" r="4.500" fill="none" stroke="#c0c4c0" stroke-width="2" stroke-dasharray="2 2" /></svg>
        </div>
        <div class="shelf-body">
          <div class="shelf-tabs">
            <button v-for="t in shelfTabs" :key="t" :class="{ active: t === 'Poly Modeling' }">{{ t }}</button>
          </div>
          <div class="shelf-icons">
            <template v-for="(t, i) in shelf" :key="i">
              <i v-if="t === '|'" class="shelf-sep" />
              <button v-else class="tb c34" :aria-label="t"><Icon :n="t" :s="28" v="-1 -1 26 26" /></button>
            </template>
            <div class="shelf-scroll"><i class="caret-up" /><b /><i class="caret-down" /></div>
          </div>
        </div>
      </section>

      <div class="work">
        <aside class="toolbox">
          <i class="grip" />
          <button v-for="t in toolbox" :key="t" class="tool" :aria-label="t"><Icon :n="t" :w="22" :s="34" v="0 -2 22 34" /></button>
          <i class="tool-gap" />
          <button class="tool" aria-label="Last tool"><Icon n="lastt" :w="22" :s="34" v="0 -2 22 34" /></button>
          <hr />
          <button v-for="t in layouts" :key="t" class="tool layout" :aria-label="t"><Icon :n="t" :w="22" :s="30" v="0 0 22 30" /></button>
          <Icon class="logo" n="mlogo" :w="22" :s="30" v="0 0 22 30" />
        </aside>
        <div class="outliner"><button>Outliner</button></div>

        <div class="centre">
          <section class="viewport">
            <nav class="menu">
              <button v-for="m in viewMenu" :key="m">{{ m }}</button>
            </nav>
            <div class="view-tools">
              <template v-for="(t, i) in viewTools" :key="i">
                <i v-if="t === '|'" class="sep c12" />
                <i v-else-if="t === '_'" class="c18" />
                <button v-else class="tb c18" :class="{ on: t.endsWith('*') }" :aria-label="base(t)"><Icon :n="base(t)" :s="16" v="0 0 16 16" /></button>
              </template>
              <input class="num" value="0.00" aria-label="Exposure" />
              <button class="tb c22" aria-label="Gamma"><Icon n="gam" :s="16" v="0 0 16 16" /></button>
              <input class="num" value="1.00" aria-label="Gamma value" />
              <button class="tb c22 on" aria-label="Color management"><Icon n="on" :s="16" v="0 0 16 16" /></button>
              <select class="gamma" aria-label="View transform"><option>sRGB gamma</option></select>
              <i class="caret-down" />
            </div>
            <div class="scene">
              <svg class="rig" width="230" height="100" viewBox="640 195 230 100" fill="none">
                <ellipse cx="801" cy="208" rx="12" ry="5" stroke="#23237a" />
                <g stroke="#e216e2">
                  <path d="M658 243L750 252M658 244l92 7M659 247l90 5M659 250l90 2M659 256l90-4M659 256l43-1M762 248l67 17M763 252l66 14M763 256l66 11M760 259l69 8" />
                  <circle cx="652" cy="249" r="7" /><path d="M646 249h14M652 243v13M658 243v14M660 244v12" />
                  <circle cx="754" cy="253" r="6" /><path d="M748 252h14M754 247v12M751 248v10M761 248v10M757 250v9" />
                  <circle cx="836" cy="268" r="7" /><path d="M829 268h14M836 261v14M832 263l8 9" />
                </g>
                <path stroke="#94603f" d="M652 250l80 8 22 3 75 6 28 3" />
                <path stroke="#a86538" d="M836 275l2-24" />
                <ellipse cx="651" cy="250" rx="5" ry="20" stroke="#23237a" transform="rotate(4 651 250)" />
                <ellipse cx="836" cy="267" rx="3" ry="20" stroke="#23237a" transform="rotate(6 836 267)" />
              </svg>
              <svg class="axis" width="30" height="32" viewBox="0 0 30 32" fill="none" font-family="DejaVu Sans,sans-serif" font-weight="bold" font-size="9">
                <path stroke="#20d820" d="M7 10v13" /><path stroke="#d22828" d="M8 23l12 1" />
                <text x="4" y="7" fill="#20e020">y</text><text x="19" y="23" fill="#d22828">x</text><text x="1" y="28" fill="#2020d8">z</text>
              </svg>
              <span class="persp">persp</span>
            </div>
          </section>

          <section class="node-editor">
            <div class="ne-title"><button>Node Editor</button></div>
            <div class="ne-frame">
              <nav class="menu">
                <button v-for="m in nodeMenu" :key="m">{{ m }}</button>
              </nav>
              <div class="ne-tools">
                <template v-for="(t, i) in nodeToolsA" :key="i">
                  <i v-if="t === '|'" class="sep c9" />
                  <i v-else-if="t === ':'" class="thin" />
                  <button v-else class="tb c26" :class="{ on: t.endsWith('*') }" :aria-label="base(t)"><Icon :n="base(t)" /></button>
                </template>
                <input class="depth" value="-1" aria-label="Depth" />
                <template v-for="(t, i) in nodeToolsB" :key="'b' + i">
                  <i v-if="t === '|'" class="sep c9" />
                  <button v-else class="tb c26" :class="{ on: t.endsWith('*') }" :aria-label="base(t)"><Icon :n="base(t)" /></button>
                </template>
                <div class="search"><input placeholder="Search..." aria-label="Search" /><i class="caret-down" /></div>
              </div>
              <div class="ne-tabs"><button class="active">Untitled_1</button><button>+</button></div>
              <div class="graph">
                <div class="node">
                  <span class="node-name">L_Arm_Joint_2_Length_MD</span>
                  <div class="node-body">
                    <i class="port in" />
                    <svg width="28" height="28" viewBox="0 0 28 28"><path fill="#55b8bb" d="M0 0h28L0 28z" /><path fill="#b6bab8" d="M28 0v28H0z" /><path fill="none" stroke="#2e3033" d="M.500.500h27v27H.500zM28 0L0 28" /><path stroke="#25282a" stroke-width="2" d="M5 5l7 6M12 5l-7 6" /><path stroke="#25282a" stroke-width="1.500" d="M15 19h8" /><circle cx="19" cy="15.500" r="1.200" /><circle cx="19" cy="22.500" r="1.200" /></svg>
                    <svg class="rows" width="20" height="20" viewBox="0 0 20 20" fill="none" stroke="#b4b0bc" stroke-width="1.500"><rect x="1" y="1" width="18" height="4" rx="2" fill="#b4b0bc" /><rect x="1" y="8" width="18" height="4" rx="2" /><rect x="1" y="15" width="18" height="4" rx="2" /></svg>
                    <i class="port out" />
                  </div>
                </div>
                <svg class="mouse" width="20" height="32" viewBox="0 0 20 32"><path fill="#fa0505" stroke="#1a0000" d="M1 1v23l4-5 6 11 4-2-5-11h8z" /></svg>
              </div>
            </div>
          </section>
        </div>

        <aside class="channel">
          <div class="ch-icons">
            <button v-for="t in ['axes', 'cspeed', 'cgraph']" :key="t" class="tb" :aria-label="t"><Icon :n="t" :s="16" v="0 0 16 16" /></button>
          </div>
          <nav class="menu">
            <button v-for="m in ['Channels', 'Edit', 'Object', 'Show']" :key="m">{{ m }}</button>
          </nav>
          <strong class="ch-node">L_Arm_Joint_2_Length_MD</strong>
          <div class="ch-rows">
            <label v-for="c in channels" :key="c[0]"><span>{{ c[0] }}</span><input :value="c[1]" /></label>
          </div>
          <strong class="ch-out">OUTPUTS</strong>
          <strong class="ch-list">defaultRenderUtilityList1</strong>
          <div class="ch-empty" />
          <div class="layer-tabs" />
          <div class="layer-tools">
            <button v-for="t in ['lup', 'ldown', 'ladd', 'lball']" :key="t" class="tb" :aria-label="t"><Icon :n="t" :s="16" v="0 0 18 18" /></button>
          </div>
          <div class="layer-list" />
        </aside>
        <div class="side-tabs">
          <button class="active">Channel Box / Layer Editor</button>
          <button>Modeling Toolkit</button>
          <button>Attribute Editor</button>
        </div>
      </div>

      <section class="time">
        <div class="frame-now"><span>1</span></div>
        <div class="ruler"><span v-for="t in ticks" :key="t">{{ t }}</span></div>
        <div class="play">
          <button v-for="t in ['stepb', 'play', 'nkey', 'stepf', 'toend']" :key="t" class="tb c22" :aria-label="t"><Icon :n="t" :s="18" /></button>
        </div>
      </section>

      <section class="range">
        <input class="r-start" value="1" aria-label="Animation start" />
        <input class="r-from" value="1" aria-label="Playback start" />
        <div class="trough">
          <div class="bar"><i /><span>1</span><span class="end">120</span><i /></div>
        </div>
        <div class="range-tools">
          <button class="tb" aria-label="Loop"><Icon n="loop" :s="18" /></button>
          <i class="sep" />
          <button class="tb" aria-label="Auto key"><Icon n="autok" :s="18" /></button>
          <button class="tb" aria-label="Preferences"><Icon n="prefs" /></button>
        </div>
      </section>

      <section class="command">
        <label for="mel">MEL</label>
        <input id="mel" />
        <i class="dots" />
        <output>// Warning: line 1: New name contains invalid characters.</output>
        <button class="tb" aria-label="Script editor"><Icon n="script" /></button>
      </section>
    </main>

    <svg class="behind" width="34" height="953" viewBox="0 0 34 953" aria-hidden="true">
      <path fill="#444" d="M0 0h34v953H0z" />
      <path fill="#606060" d="M0 0h9v14H0zM10 0h19v14H10z" /><path fill="#d0d0d0" d="M15 2h11l-5 5z" /><path fill="#28e010" d="M33 0h1v17h-1z" />
      <path fill="#2d2d2d" stroke="#5b9fbf" d="M-2 23H8v20H-2z" /><path fill="#c4c4c4" d="M0 24h6v4H0zM0 31h6v4H0zM0 38h6v4H0z" />
      <path stroke="#c4c4c4" stroke-width="2" fill="none" d="M13 26h7M13 33h9M13 40h9M20 26h9M25 26v15" />
      <path fill="#333" d="M0 46h34v4H0zM0 51h34v17H0z" />
      <path fill="#fff" d="M0 69h26v30H0z" /><path stroke="#888" d="M-1 78l8 10M7 78l-8 10" />
      <path fill="#3a3a3a" d="M0 99h25v50H0z" /><path fill="none" stroke="#777" d="M0 101.500h23.500V908H0" />
      <path fill="#2b2b2b" d="M0 149h11v364H0z" /><path fill="#373737" d="M11 149h11v364H11z" />
      <path fill="#b8b8b8" d="M12 157l5-6 5 6z" /><rect x="11" y="476" width="10" height="24" rx="4" fill="#5d5d5d" /><path fill="#b8b8b8" d="M12 504h10l-5 5zM1 514l5 5-5 4z" />
      <path fill="#363636" d="M0 533h20v18H0z" /><path fill="#2d2d2d" d="M0 553h6v349H0z" /><path fill="#373737" d="M6 553h11v349H6z" />
      <path fill="#b8b8b8" d="M7 560l5-5 4 5z" /><rect x="7" y="623" width="10" height="236" rx="4" fill="#5d5d5d" /><path fill="#b8b8b8" d="M7 893h9l-5 5zM29 892l5 5-5 5z" />
      <path stroke="#2c2c2c" fill="none" d="M26 100v810H0M27 879h7M0 916h34" />
      <circle cx="7" cy="934" r="7" fill="none" stroke="#c0c0c0" stroke-width="2" stroke-dasharray="16 5" /><path stroke="#e08040" stroke-width="2" d="M7 929v10" />
      <circle cx="34" cy="931" r="5" fill="none" stroke="#c0c0c0" stroke-width="2" />
    </svg>

    <section class="notepad" aria-label="Notepad">
      <div class="np-title">
        <svg width="17" height="18" viewBox="0 0 17 18"><path fill="#7cc0d4" stroke="#5e93a5" d="M3 2h12l-2 13H1z" /><path fill="#a5dbe8" d="M4 3h10l-1 6H3z" /><path stroke="#cfc39c" stroke-width="2" d="M4 16h10l1-13" fill="none" /><path stroke="#555" stroke-dasharray="1 1" stroke-width="2" d="M4 2h11" /></svg>
        <span>Untitled - Notepad</span>
        <button aria-label="Minimize"><svg width="10" height="10"><path stroke="#000" d="M0 5.500h10" /></svg></button>
        <button aria-label="Maximize"><svg width="10" height="10"><path fill="none" stroke="#000" d="M.500.500h9v9h-9z" /></svg></button>
        <button aria-label="Close"><svg width="10" height="10"><path stroke="#000" d="M0 0l10 10M10 0L0 10" /></svg></button>
      </div>
      <nav class="np-menu">
        <button v-for="m in ['File', 'Edit', 'Format', 'View', 'Help']" :key="m">{{ m }}</button>
      </nav>
      <div class="np-body">
        <div class="np-text">
          <textarea v-model="note" aria-label="Text" wrap="off" spellcheck="false" />
          <i class="np-caret" :style="caretStyle" />
        </div>
        <div class="np-scroll">
          <svg width="15" height="17" viewBox="0 0 15 17"><path fill="none" stroke="#505050" stroke-width="2" d="M4 11l3.500-4 3.500 4" /></svg>
          <i />
        </div>
      </div>
    </section>
  </div>
</template>

<style>
body { margin: 0; overflow: hidden; background: #444; }
</style>

<style scoped>
* { box-sizing: border-box; }
.desktop { position: relative; display: flex; height: 100vh; overflow: hidden; font: 11px/14px "Open Sans", "Noto Sans", sans-serif; color: #d0d4d0; }
button, select, input, textarea { font: inherit; color: inherit; background: none; border: 0; padding: 0; margin: 0; border-radius: 0; outline: 0; }
select { appearance: none; }
svg { display: block; flex: none; }
button { flex: none; white-space: nowrap; }
.maya { flex: 1; min-width: 0; display: flex; flex-direction: column; background: #585c58; overflow: hidden; }
.behind { flex: none; height: 100%; }
.title { flex: none; display: flex; gap: 14px; align-items: flex-end; height: 9px; padding: 0 0 5px 2px; line-height: 14px; background: #f7fdf9; color: #222; overflow: hidden; }
.title span { flex: none; }

.menu { display: flex; align-items: flex-start; gap: 14px; }
.tb { display: flex; align-items: center; justify-content: center; }
.tb svg { overflow: visible; }
.on { background: #5b9fbf; }
.c34 { width: 34px; height: 30px; }
.c26 { width: 26px; height: 26px; }
.c22 { width: 22px; height: 22px; flex: none; }
.c18 { width: 18px; height: 18px; flex: none; }
.c12 { width: 12px; height: 18px; flex: none; }
.c9 { width: 9px; height: 22px; flex: none; }
.sep { position: relative; display: flex; justify-content: center; align-items: center; }
.sep::before { content: ""; width: 2px; height: 80%; background: #8b8f8b; border-radius: 1px; box-shadow: 0 0 1px #333; }
.sep.arrow::before { width: 6px; height: 90%; background: #8b8f8b; clip-path: polygon(0 0, 20% 0, 20% 25%, 100% 50%, 20% 75%, 20% 100%, 0 100%); }
.caret-down, .caret-up { flex: none; width: 9px; height: 6px; background: #c8ccc8; clip-path: polygon(0 0, 100% 0, 50% 100%); }
.caret-up { clip-path: polygon(0 100%, 100% 100%, 50% 0); }
.small { width: 7px; height: 5px; background: #9a9e9a; }

.head { flex: none; display: flex; justify-content: space-between; border-bottom: 2px solid #3a3e3a; border-top: 1px solid #3f433f; }
.main-menu { gap: 13px; padding: 1px 0 0 20px; height: 26px; }
.status { display: flex; align-items: center; height: 24px; }
.mode { width: 74px; margin-left: -2px; }
.mode-caret { margin: 0 4px 0 2px; }
.live-caret { margin: 0 12px 0 4px; }
.live { width: 90px; text-align: left; }
.sym-caret { margin: 0 12px 0 4px; }
.sym { width: 91px; text-align: left; }
.sign { display: flex; align-items: center; gap: 4px; width: 98px; color: #fff; font: bold 11px/14px "Liberation Sans", sans-serif; margin-left: 2px; }
.head-right { display: flex; flex-direction: column; padding-right: 3px; }
.workspace { display: flex; align-items: center; height: 26px; }
.workspace select { width: 168px; margin-left: 9px; }
.workspace .c22 { margin-left: 7px; }
.panels { display: flex; justify-content: flex-end; }

.shelf { flex: none; display: flex; padding-top: 3px; border-bottom: 2px solid #373b37; height: 66px; }
.shelf-side { width: 13px; height: 59px; background: #373b37; display: flex; flex-direction: column; justify-content: space-between; padding: 11px 0 8px; }
.bars { width: 8px; height: 5px; border-top: 2px solid #aeb2ae; border-bottom: 2px solid #aeb2ae; }
.shelf-body { flex: 1; min-width: 0; margin: 0 3px; }
.shelf-tabs { display: flex; background: #373b37; height: 17px; align-items: flex-end; }
.shelf-tabs button { height: 15px; padding: 0 11px; border-radius: 2px 2px 0 0; color: #a0a4a0; }
.shelf-tabs .active { background: #585c58; color: #f0f4f0; }
.shelf-icons { display: flex; align-items: center; height: 41px; padding-left: 3px; }
.shelf-sep { flex: none; width: 2px; height: 33px; margin: 0 3px 0 4px; background: #8b8f8b; }
.shelf-scroll { margin-left: auto; margin-right: 5px; width: 11px; height: 33px; background: #373b37; display: flex; flex-direction: column; align-items: center; justify-content: space-between; padding: 3px 0; }
.shelf-scroll b { width: 10px; height: 10px; border-radius: 5px; background: #585c58; }

.work { flex: 1; min-height: 0; display: flex; background: #373b37; padding-bottom: 3px; }
.toolbox { flex: none; width: 22px; background: #585c58; display: flex; flex-direction: column; overflow: hidden; }
.grip { flex: none; height: 6px; margin: 3px 4px 2px 0; background: radial-gradient(#8b8f8b 1px, transparent 1px) 0 0 / 3px 3px; }
.tool { height: 35px; }
.tool-gap { flex: none; height: 36px; }
.toolbox hr { flex: none; width: 18px; margin: 4px 0 5px; border: 0; border-top: 2px solid #8b8f8b; }
.tool.layout { height: 35px; }
.logo { margin-top: auto; margin-bottom: 5px; }
.outliner { flex: none; width: 21px; padding-top: 10px; display: flex; justify-content: center; align-items: flex-start; color: #a0a4a0; }
.outliner button { writing-mode: vertical-rl; transform: rotate(180deg); }
.centre { flex: 1; min-width: 0; display: flex; flex-direction: column; }
.viewport { flex: none; height: 283px; background: #585c58; display: flex; flex-direction: column; }
.viewport .menu { padding: 5px 0 0 11px; height: 20px; }
.view-tools { display: flex; align-items: center; height: 20px; padding-left: 2px; }
.num { width: 36px; height: 14px; padding-left: 5px; background: #373b37; border-radius: 2px; color: #d8dcd8; }
.view-tools .num { margin-left: 2px; }
.view-tools .c22.on { width: 17px; height: 17px; margin-left: 4px; }
.gamma { width: 115px; margin-left: 5px; }
.scene { position: relative; flex: 1; }
.rig { position: absolute; left: 597px; top: 27px; }
.axis { position: absolute; left: 20px; bottom: 20px; }
.persp { position: absolute; left: 638px; bottom: 9px; color: #fff; font-weight: 600; }

.node-editor { flex: 1; min-height: 0; display: flex; flex-direction: column; padding-top: 4px; }
.ne-title { display: flex; padding-left: 1px; }
.ne-title button { height: 16px; padding: 0 9px; background: #585c58; border-radius: 2px 2px 0 0; color: #f0f4f0; }
.ne-frame { flex: 1; min-height: 0; display: flex; flex-direction: column; background: #585c58; border: 1px solid #9a9e9a; outline: 1px solid #585c58; margin: 0 3px 1px 2px; padding: 0 2px 2px 3px; }
.ne-frame .menu { gap: 13px; padding: 1px 0 0 4px; height: 17px; }
.ne-tools { display: flex; align-items: center; height: 26px; margin: 0 0 8px -3px; }
.thin { flex: none; width: 1px; height: 25px; margin: 0 2px; background: #373b37; }
.depth { flex: none; width: 25px; height: 26px; padding-left: 5px; background: #373b37; border-radius: 2px; color: #d8dcd8; }
.search { display: flex; align-items: center; width: 169px; height: 17px; margin: 2px 0 0 4px; padding: 0 4px 0 3px; background: #373b37; border-radius: 2px; }
.search input { flex: 1; min-width: 0; }
.search input::placeholder { color: #8b8f8b; opacity: 1; }
.ne-tabs { display: flex; align-items: flex-end; height: 19px; background: #373b37; margin-left: -1px; }
.ne-tabs button { height: 17px; padding: 0 10px; border-radius: 2px 2px 0 0; }
.ne-tabs .active { background: #585c58; color: #f0f4f0; }
.graph { position: relative; flex: 1; margin-left: -1px; border: 2px solid #4d79a3; background-color: #373b37; background-image: linear-gradient(90deg, #232623 2px, transparent 2px), linear-gradient(#232623 2px, transparent 2px); background-size: 48px 48px; background-position: 21px 0, 0 45px; }
.node { position: absolute; left: 294px; top: 56px; display: flex; flex-direction: column; }
.node-name { padding-left: 7px; font-size: 17px; line-height: 22px; color: #4fe0a6; margin-bottom: 2px; white-space: nowrap; }
.node-body { width: 201px; height: 43px; display: flex; align-items: center; padding: 0 16px 0 18px; background: #5a3b79; border: 3px solid #50efb0; border-radius: 8px; }
.port { flex: none; width: 20px; height: 20px; border-radius: 10px; background: #f8fcf8; border: 2px solid #141414; }
.port.in { margin-left: -30px; margin-right: 10px; }
.rows { margin-left: auto; }
.port.out { margin-right: -26px; margin-left: 7px; }
.mouse { position: absolute; left: 395px; top: 100px; }

.channel { flex: none; width: 445px; margin-left: 2px; background: #585c58; display: flex; flex-direction: column; padding: 0 4px 2px 5px; }
.ch-icons { display: flex; justify-content: flex-end; gap: 4px; padding: 3px 2px 0; height: 24px; }
.channel .menu { padding-left: 6px; height: 19px; }
.ch-node, .ch-out, .ch-list { line-height: 14px; color: #c8ccc8; }
.ch-rows { display: grid; gap: 1px; }
.ch-rows label { display: flex; justify-content: flex-end; gap: 6px; line-height: 14px; }
.ch-rows input { width: 91px; height: 14px; padding-left: 9px; background: #373b37; color: #f0f4f0; }
.ch-out { margin-top: 2px; line-height: 16px; }
.ch-list { padding-left: 9px; line-height: 16px; margin-bottom: 12px; }
.ch-empty { flex: 315; background: #373b37; border-right: 1px solid #4c504c; }
.layer-tabs { flex: none; height: 17px; margin-top: 11px; background: #373b37; }
.layer-tools { flex: none; height: 45px; display: flex; justify-content: flex-end; align-items: flex-end; gap: 8px; padding: 0 8px 6px; }
.layer-list { flex: 137; background: #373b37; margin: 0 4px 4px 0; }
.side-tabs { flex: none; width: 15px; padding-top: 2px; display: flex; flex-direction: column; font-size: 10px; }
.side-tabs button { writing-mode: vertical-rl; padding: 12px 0; width: 14px; line-height: 14px; text-align: left; color: #a0a4a0; }
.side-tabs .active { padding: 10px 0; background: #585c58; color: #f0f4f0; font-weight: 600; }

.time { flex: none; display: flex; height: 35px; padding: 4px 3px 4px 0; border-bottom: 2px solid #3c403c; }
.frame-now { width: 12px; display: flex; align-items: flex-end; padding: 0 0 1px 2px; color: #fff; border-left: 1px solid #373b37; }
.ruler { flex: 1; min-width: 0; display: flex; background: #373b37; padding-left: 39px; }
.ruler span { flex: none; width: 64px; padding-left: 2px; font-size: 10px; line-height: 12px; color: #8b8f8b; background: linear-gradient(#8b8f8b, #8b8f8b) 0 12px / 2px 15px no-repeat; }
.play { display: flex; align-items: center; width: 115px; }
.range { flex: none; display: flex; align-items: center; height: 35px; padding: 0 3px 0 0; border-bottom: 2px solid #3c403c; }
.range input { height: 23px; background: #373b37; border-radius: 2px; color: #c8ccc8; }
.r-start { width: 78px; }
.range .r-from { width: 84px; margin: 0 7px 0 8px; padding-left: 4px; }
.trough { flex: 1; display: flex; align-items: center; height: 23px; background: #373b37; padding-left: 6px; }
.bar { display: flex; align-items: center; gap: 4px; width: 589px; height: 18px; padding: 0 3px; background: #585c58; border-radius: 4px; }
.bar i { width: 15px; height: 13px; border-radius: 4px; background: #9a9e9a; }
.bar .end { margin-left: auto; }
.range-tools { display: flex; align-items: center; justify-content: flex-end; width: 110px; padding-right: 3px; }
.range-tools .tb { width: 28px; }
.range-tools .sep { width: 14px; height: 22px; }
.command { flex: none; display: flex; align-items: center; height: 28px; padding-left: 4px; }
.command label { width: 33px; }
.command input { width: 637px; height: 21px; background: #373b37; border-radius: 2px; }
.dots { flex: none; width: 2px; height: 12px; margin: 0 3px; border-left: 1px dotted #9a9e9a; }
.command output { flex: 1; min-width: 0; height: 23px; line-height: 24px; padding-left: 6px; background: #d9db96; color: #3a3c2c; overflow: hidden; white-space: nowrap; }
.command .tb { margin: 0 8px 0 4px; }

.notepad { position: absolute; left: 930px; right: 139px; top: 599px; bottom: 0; display: flex; flex-direction: column; background: #fff; color: #000; border: 1px solid #2277bb; border-bottom: 0; box-shadow: 0 4px 16px rgba(0, 0, 0, .6); font-size: 12px; }
.np-title { flex: none; display: flex; align-items: center; height: 28px; padding: 0 1px 0 8px; }
.np-title span { flex: 1; margin-left: 4px; }
.np-title button { width: 45px; display: flex; justify-content: center; }
.np-menu { flex: none; display: flex; align-items: flex-start; gap: 12px; height: 22px; padding: 4px 0 0 7px; border-bottom: 2px solid #eee; }
.np-body { flex: 1; min-height: 0; display: flex; }
.np-text { position: relative; flex: 1; min-width: 0; overflow: hidden; margin-right: 4px; font: 13px/18px "DejaVu Sans Mono", monospace; }
.np-text textarea { display: block; width: 100%; height: 100%; padding: 0 0 0 4px; resize: none; overflow: hidden; white-space: pre; }
.np-caret { position: absolute; width: 1px; height: 18px; background: #000; }
.np-scroll { flex: none; width: 16px; background: #f0f0f0; display: flex; flex-direction: column; }
.np-scroll i { flex: 1; margin-top: 43px; background: #cdcdcd; }
</style>
